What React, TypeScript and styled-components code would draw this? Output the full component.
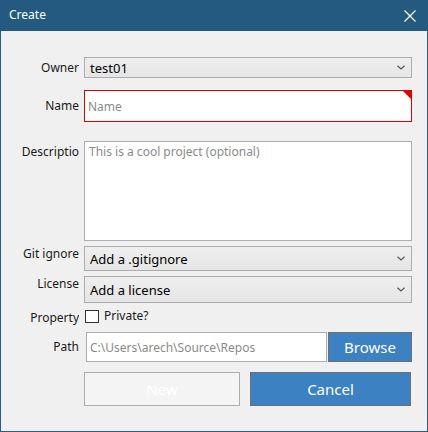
import React from "react";
import styled, { createGlobalStyle } from "styled-components";

const Global = createGlobalStyle`
  html, body { margin: 0; padding: 0; background: #f0f0f0; }
  body { font-family: "Noto Sans", "Open Sans", sans-serif; }
  * { box-sizing: border-box; }
`;

const Window = styled.div`
  width: 428px;
  height: 432px;
  background: #f0f0f0;
  border: 1px solid #2a5d84;
  border-top: none;
  display: flex;
  flex-direction: column;
`;

const TitleBar = styled.div`
  height: 31px;
  margin: 0 -1px;
  background: #245a80;
  color: #ffffff;
  display: flex;
  align-items: center;
  justify-content: space-between;
  padding: 0 9px 0 9px;
  font-size: 12px;
`;

const Title = styled.span`
  line-height: 16px;
  margin-top: -1px;
`;

const CloseButton = styled.button`
  width: 16px;
  height: 16px;
  padding: 0;
  border: none;
  background: transparent;
  display: flex;
  align-items: center;
  justify-content: center;
  margin-right: 1px;
`;

const Body = styled.div`
  padding: 26px 15px 0 0;
  display: flex;
  flex-direction: column;
`;

const Row = styled.div<{ $mt: number; $align?: string }>`
  display: grid;
  grid-template-columns: 78px 1fr;
  column-gap: 5px;
  margin-top: ${(p) => p.$mt}px;
  align-items: ${(p) => p.$align || "center"};
`;

const Label = styled.div<{ $pt?: number }>`
  text-align: right;
  font-size: 12px;
  line-height: 16px;
  color: #1a1a1a;
  padding-top: ${(p) => p.$pt || 0}px;
  white-space: nowrap;
  overflow: hidden;
`;

const Combo = styled.div<{ $h: number }>`
  height: ${(p) => p.$h}px;
  border: 1px solid #acacac;
  background: linear-gradient(#efefef, #e5e5e5);
  display: flex;
  align-items: center;
  justify-content: space-between;
  padding: 0 6px 0 5px;
  font-size: 13px;
  color: #000;
`;

const TextInput = styled.input<{ $h: number; $invalid?: boolean }>`
  width: 100%;
  height: ${(p) => p.$h}px;
  border: 1px solid ${(p) => (p.$invalid ? "#e00000" : "#abadb3")};
  background: #fff;
  padding: 0 3px;
  font-family: "Noto Sans", "Open Sans", sans-serif;
  font-size: 12px;
  color: #000;
  outline: none;
  &::placeholder { color: #8a8a8a; }
`;

const InvalidWrap = styled.div`
  position: relative;
`;

const Corner = styled.div`
  position: absolute;
  top: 1px;
  right: 1px;
  width: 0;
  height: 0;
  border-top: 8px solid #e00000;
  border-left: 8px solid transparent;
`;

const TextArea = styled.textarea`
  display: block;
  width: 100%;
  height: 100px;
  border: 1px solid #abadb3;
  background: #fff;
  padding: 2px 4px;
  resize: none;
  font-family: "Noto Sans", "Open Sans", sans-serif;
  font-size: 12px;
  line-height: 16px;
  outline: none;
  &::placeholder { color: #8a8a8a; }
`;

const CheckRow = styled.label`
  display: flex;
  align-items: center;
  gap: 5px;
  font-size: 12px;
  line-height: 16px;
  color: #1a1a1a;
  margin-left: 1px;
`;

const Box = styled.span`
  width: 14px;
  height: 13px;
  background: #fff;
  border: 1px solid #333;
`;

const PathRow = styled.div`
  display: flex;
  gap: 1px;
  padding-left: 2px;
`;

const Button = styled.button<{ $w: number; $h: number; $primary?: boolean; $fs: number }>`
  width: ${(p) => p.$w}px;
  height: ${(p) => p.$h}px;
  flex: none;
  border: 1px solid ${(p) => (p.$primary ? "#6f6f6f" : "#adadad")};
  background: ${(p) => (p.$primary ? "#3c81c1" : "#f4f4f4")};
  color: #ffffff;
  font-family: "Noto Sans", "Open Sans", sans-serif;
  font-size: ${(p) => p.$fs}px;
  padding: 0;
`;

const Buttons = styled.div`
  display: flex;
  gap: 10px;
`;

const Chevron = () => (
  <svg width="8" height="5" viewBox="0 0 8 5">
    <path d="M0.5 0.8 L4 4 L7.5 0.8" fill="none" stroke="#555" strokeWidth="1.2" />
  </svg>
);

export default function App() {
  return (
    <>
      <Global />
      <Window>
        <TitleBar>
          <Title>Create</Title>
          <CloseButton aria-label="Close">
            <svg width="12" height="12" viewBox="0 0 12 12">
              <path d="M0.5 0.5 L11.5 11.5 M11.5 0.5 L0.5 11.5" stroke="#fff" strokeWidth="1.3" />
            </svg>
          </CloseButton>
        </TitleBar>
        <Body>
          <Row $mt={0}>
            <Label>Owner</Label>
            <Combo $h={21}>
              <span>test01</span>
              <Chevron />
            </Combo>
          </Row>
          <Row $mt={12}>
            <Label>Name</Label>
            <InvalidWrap>
              <TextInput $h={32} $invalid placeholder="Name" />
              <Corner />
            </InvalidWrap>
          </Row>
          <Row $mt={19} $align="start">
            <Label $pt={3}>Descriptio</Label>
            <TextArea placeholder="This is a cool project (optional)" />
          </Row>
          <Row $mt={5} $align="start">
            <Label $pt={0}>Git ignore</Label>
            <Combo $h={25}>
              <span>Add a .gitignore</span>
              <Chevron />
            </Combo>
          </Row>
          <Row $mt={5} $align="start">
            <Label $pt={0}>License</Label>
            <Combo $h={27}>
              <span>Add a license</span>
              <Chevron />
            </Combo>
          </Row>
          <Row $mt={5} $align="start">
            <Label $pt={2}>Property</Label>
            <CheckRow>
              <Box />
              <span>Private?</span>
            </CheckRow>
          </Row>
          <Row $mt={6}>
            <Label>Path</Label>
            <PathRow>
              <TextInput $h={30} placeholder="C:\Users\arech\Source\Repos" />
              <Button $w={84} $h={30} $primary $fs={15}>Browse</Button>
            </PathRow>
          </Row>
          <Row $mt={10}>
            <span />
            <Buttons>
              <Button $w={156} $h={34} $fs={15}>New</Button>
              <Button $w={161} $h={34} $primary $fs={15}>Cancel</Button>
            </Buttons>
          </Row>
        </Body>
      </Window>
    </>
  );
}
